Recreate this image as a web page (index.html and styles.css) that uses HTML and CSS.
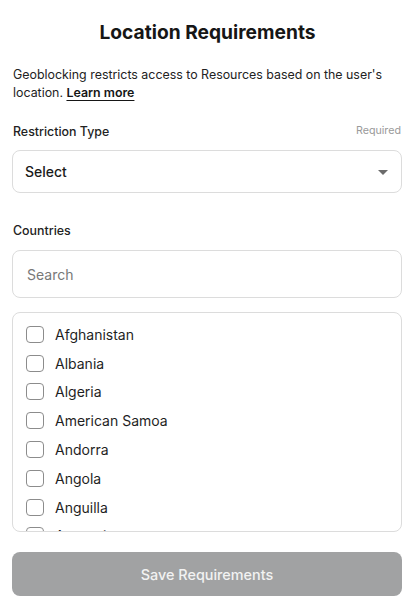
FILE: index.html
```html
<!DOCTYPE html>
<html lang="en">
<head>
<meta charset="utf-8">
<title>Location Requirements</title>
<link rel="stylesheet" href="styles.css">
</head>
<body>
<main class="panel">
  <h1 class="title">Location Requirements</h1>
  <p class="intro">Geoblocking restricts access to Resources based on the user's location. <a href="#" class="learn">Learn more</a></p>

  <div class="field">
    <div class="label-row first">
      <label class="label">Restriction Type</label>
      <span class="required">Required</span>
    </div>
    <div class="select">
      <span class="select-text">Select</span>
      <svg class="caret" width="10" height="5" viewBox="0 0 10 5"><path d="M0 0h10L5 5z" fill="#6b6b6b"/></svg>
    </div>
  </div>

  <div class="field countries">
    <div class="label-row">
      <label class="label">Countries</label>
    </div>
    <div class="search"><span class="placeholder">Search</span></div>
    <ul class="list">
      <li class="item"><span class="box"></span>Afghanistan</li>
      <li class="item"><span class="box"></span>Albania</li>
      <li class="item"><span class="box"></span>Algeria</li>
      <li class="item"><span class="box"></span>American Samoa</li>
      <li class="item"><span class="box"></span>Andorra</li>
      <li class="item"><span class="box"></span>Angola</li>
      <li class="item"><span class="box"></span>Anguilla</li>
      <li class="item"><span class="box"></span>Antarctica</li>
      <li class="item"><span class="box"></span>Antigua and Barbuda</li>
      <li class="item"><span class="box"></span>Argentina</li>
    </ul>
  </div>

  <button class="save" type="button">Save Requirements</button>
</main>
</body>
</html>
```

FILE: styles.css
```css
* { box-sizing: border-box; }
html, body { margin: 0; padding: 0; background: #fff; }
body {
  font-family: Inter, "Noto Sans", "Liberation Sans", sans-serif;
  color: #1f1f1f;
}
.panel {
  padding: 18px 12px 0 13px;
  display: flex;
  flex-direction: column;
}
.title {
  margin: 0;
  font-size: 19.2px;
  line-height: 28px;
  font-weight: 700;
  text-align: center;
  color: #161616;
}
.intro {
  margin: 20px 0 0;
  font-size: 12.4px;
  line-height: 18px;
  color: #222;
}
.learn {
  color: #161616;
  font-weight: 600;
  text-decoration: underline;
  text-underline-offset: 3px;
}
.field { margin-top: 21px; display: flex; flex-direction: column; }
.countries { margin-top: 29px; }
.label-row {
  display: flex;
  justify-content: space-between;
  align-items: baseline;
  margin-bottom: 10px;
}
.label-row.first { margin-bottom: 9px; }
.label {
  font-size: 12.4px;
  line-height: 18px;
  font-weight: 500;
  color: #222;
}
.required {
  font-size: 10.7px;
  color: #9a9a9a;
  margin-right: 1px;
  transform: translateY(-2px);
}
.select {
  height: 43px;
  border: 1px solid #dcdcdc;
  border-radius: 8px;
  margin-left: -1px;
  display: flex;
  align-items: center;
  justify-content: space-between;
  padding: 0 13px 0 12px;
}
.select-text {
  font-size: 14px;
  font-weight: 500;
  color: #1a1a1a;
}
.caret { margin-top: 2px; }
.search {
  height: 48px;
  border: 1px solid #dcdcdc;
  border-radius: 8px;
  margin-left: -1px;
  display: flex;
  align-items: center;
  padding-left: 14px;
}
.placeholder {
  font-size: 14px;
  color: #787878;
}
.list {
  list-style: none;
  margin: 14px 0 0 -1px;
  padding: 7px 13px 0;
  height: 220px;
  border: 1px solid #dcdcdc;
  border-radius: 8px;
  overflow: hidden;
}
.item {
  height: 28.8px;
  display: flex;
  align-items: center;
  font-size: 14px;
  color: #1f1f1f;
}
.box {
  width: 18px;
  height: 17px;
  border: 1px solid #8c8c8c;
  border-radius: 4px;
  margin-right: 11px;
  flex: none;
}
.save {
  margin: 20px 0 0 -1px;
  height: 44px;
  border: none;
  border-radius: 8px;
  background: #a1a2a3;
  color: #f2f2f2;
  font-family: inherit;
  font-size: 14.4px;
  font-weight: 500;
}
```
